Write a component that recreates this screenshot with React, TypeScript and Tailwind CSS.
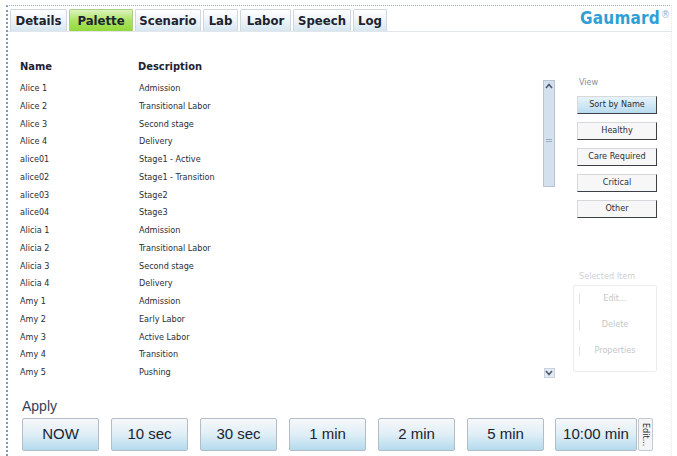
import React from "react";

const tabs = [
  { label: "Details", w: 57 },
  { label: "Palette", w: 64, active: true },
  { label: "Scenario", w: 66 },
  { label: "Lab", w: 35 },
  { label: "Labor", w: 51 },
  { label: "Speech", w: 58 },
  { label: "Log", w: 34 },
];

const rows: [string, string][] = [
  ["Alice 1", "Admission"],
  ["Alice 2", "Transitional Labor"],
  ["Alice 3", "Second stage"],
  ["Alice 4", "Delivery"],
  ["alice01", "Stage1 - Active"],
  ["alice02", "Stage1 - Transition"],
  ["alice03", "Stage2"],
  ["alice04", "Stage3"],
  ["Alicia 1", "Admission"],
  ["Alicia 2", "Transitional Labor"],
  ["Alicia 3", "Second stage"],
  ["Alicia 4", "Delivery"],
  ["Amy 1", "Admission"],
  ["Amy 2", "Early Labor"],
  ["Amy 3", "Active Labor"],
  ["Amy 4", "Transition"],
  ["Amy 5", "Pushing"],
];

const viewButtons = ["Sort by Name", "Healthy", "Care Required", "Critical", "Other"];
const applyButtons = [
  { label: "NOW", w: 77 },
  { label: "10 sec", w: 77 },
  { label: "30 sec", w: 77 },
  { label: "1 min", w: 77 },
  { label: "2 min", w: 77 },
  { label: "5 min", w: 77 },
  { label: "10:00 min", w: 82 },
];

const tahoma = { fontFamily: "'DejaVu Sans Condensed', 'Liberation Sans', sans-serif" };
const ui = { fontFamily: "'Liberation Sans', Arial, sans-serif" };

function Chevron({ up }: { up?: boolean }) {
  return (
    <svg width="8" height="6" viewBox="0 0 8 6">
      <path
        d={up ? "M1 5 L4 1.5 L7 5" : "M1 1 L4 4.5 L7 1"}
        fill="none"
        stroke="#4a5a70"
        strokeWidth="1.6"
      />
    </svg>
  );
}

export default function App() {
  return (
    <div className="w-[677px] h-[456px] bg-white overflow-hidden pl-[6px] pt-[5px]" style={ui}>
      <div className="w-[666px] h-[451px] border-l-2 border-t border-dotted border-l-[#7f97bb] border-t-[#98a8c0] border-r border-r-[#e4e6ea] flex flex-col">
        {/* tab strip */}
        <div className="flex items-end h-[26px] pl-[2px] border-b border-[#e2e6ea]">
          <div className="flex gap-[2px]">
            {tabs.map((t) => (
              <div
                key={t.label}
                style={{ width: t.w, ...tahoma }}
                className={
                  "h-[22px] flex items-center justify-center border border-b-0 rounded-t-[2px] text-[13px] font-bold text-[#1d2330] " +
                  (t.active
                    ? "border-[#a9cf86] bg-gradient-to-b from-[#dcf2bc] via-[#ace35e] to-[#92d83a]"
                    : "border-[#cfd6de] bg-gradient-to-b from-[#ffffff] via-[#eef4f8] to-[#d6e7f1]")
                }
              >
                {t.label}
              </div>
            ))}
          </div>
          <div className="ml-auto mr-[1px] self-start pt-[2px] flex items-start text-[#2f9fd6]" style={tahoma}>
            <span className="text-[17px] font-bold leading-[20px] tracking-[0.2px]">Gaumard</span>
            <span className="text-[10px] leading-[10px] ml-[1px] mt-[2px] text-[#8fb8d0]">®</span>
          </div>
        </div>

        {/* list + side panel */}
        <div className="flex h-[360px]">
          <div className="flex pl-[12px] pt-[26px] w-[547px]">
            <div className="w-[521px]" style={tahoma}>
              <div className="flex h-[18px] items-center text-[11px] font-bold text-[#1e2230]">
                <div className="w-[118px]">Name</div>
                <div>Description</div>
              </div>
              <div className="mt-[4px]">
                {rows.map(([n, d], i) => (
                  <div key={i} className="flex h-[17.75px] items-center text-[9px] text-[#2a2e36]">
                    <div className="w-[119px]">{n}</div>
                    <div>{d}</div>
                  </div>
                ))}
              </div>
            </div>
            {/* scrollbar */}
            <div className="w-[12px] ml-[2px] pt-[22px] flex flex-col items-center">
              <div className="w-[12px] h-[107px] bg-[#d4e0ec] border border-[#b6c4d4] flex flex-col items-center pt-[2px]">
                <Chevron up />
                <div className="mt-[50px] w-[6px] border-t border-b border-[#9fb0c4] h-[3px]" />
              </div>
              <div className="mt-[181px] w-[11px] h-[10px] bg-[#e4eaf2] border border-[#c8d2de] flex items-center justify-center">
                <Chevron />
              </div>
            </div>
          </div>

          {/* view panel */}
          <div className="ml-[18px] w-[88px] flex flex-col" style={tahoma}>
            <div className="mt-[44px] h-[12px] pl-[6px] text-[9px] leading-[12px] text-[#8a8e96]">View</div>
            <div className="mt-[8px] pl-[4px] flex flex-col gap-[8px]">
              {viewButtons.map((b, i) => (
                <div
                  key={b}
                  className={
                    "w-[80px] h-[18px] flex items-center justify-center text-[9px] text-[#2a2e36] border border-[#d6d8dc] border-b-[#3c3f46] border-r-[#3c3f46] " +
                    (i === 0 ? "bg-gradient-to-b from-[#e8f4fb] to-[#b8dcef]" : "bg-[#f7f7f7]")
                  }
                >
                  {b}
                </div>
              ))}
            </div>
            <div className="mt-[52px] h-[12px] pl-[6px] text-[9px] leading-[12px] text-[#cfd1d4]">Selected Item</div>
            <div className="mt-[3px] w-[84px] h-[87px] border border-[#ebecee] rounded-[2px] flex flex-col pt-[6px] gap-[12px] text-[9px] text-[#c4c6ca]">
              {["Edit...", "Delete", "Properties"].map((b) => (
                <div key={b} className="relative h-[14px] flex items-center justify-center">
                  <span className="absolute left-[5px] top-[2px] h-[10px] border-l border-[#e2e3e5]" />
                  {b}
                </div>
              ))}
            </div>
          </div>
        </div>

        {/* apply strip */}
        <div className="pl-[14px]">
          <div className="h-[16px] text-[14px] leading-[16px] text-[#34405a] mt-[6px]">Apply</div>
          <div className="mt-[4px] flex items-start gap-[12px]">
            {applyButtons.map((b, i) => (
              <div
                key={b.label}
                style={{ width: b.w, marginLeft: i === 6 ? -1 : 0 }}
                className="h-[33px] flex items-center justify-center text-[15px] text-[#1c2330] border border-[#b4bcc6] rounded-[2px] bg-gradient-to-b from-[#f6f8fa] via-[#dfeef6] to-[#b4daee]"
              >
                {b.label}
              </div>
            ))}
            <div
              className="-ml-[11px] w-[15px] h-[33px] flex items-center justify-center border border-[#c4cad2] rounded-[2px] bg-[#f3f5f7] text-[9px] text-[#2a2e36]"
              style={{ writingMode: "vertical-rl", ...tahoma }}
            >
              Edit...
            </div>
          </div>
        </div>
      </div>
    </div>
  );
}
